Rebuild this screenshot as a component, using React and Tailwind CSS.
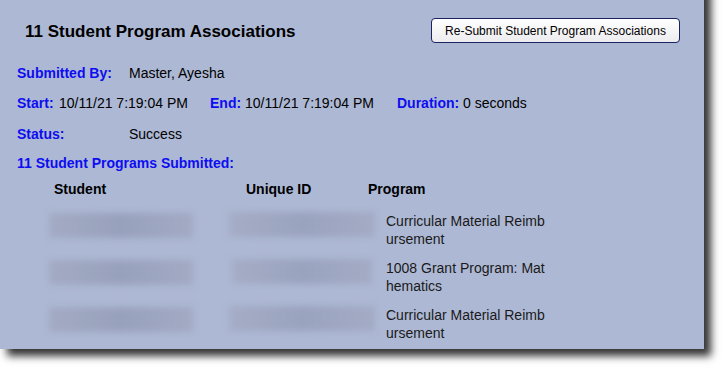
export default function App() {
  const lbl = "font-bold text-[#0d0df2]";
  const rows = [
    "Curricular Material Reimbursement",
    "1008 Grant Program: Mathematics",
    "Curricular Material Reimbursement",
  ];
  return (
    <div className="w-[724px] h-[369px] bg-white overflow-hidden" style={{ fontFamily: '"Liberation Sans", Arial, sans-serif' }}>
      <div className="w-[704px] h-[369px] -mt-[20px] bg-[#adb8d4] shadow-[7px_7px_8px_rgba(0,0,0,0.8)] text-[14px] text-black pt-[20px] leading-[16px]">
        <div className="flex items-start justify-between pl-[25px] pr-[24px] pt-[18px]">
          <div className="text-[17px] font-bold mt-[5px] leading-[18px]">11 Student Program Associations</div>
          <button className="h-[25px] w-[249px] rounded-[4px] border border-[#1c2260] bg-gradient-to-b from-white to-[#ececef] text-[12px] text-black">
            Re-Submit Student Program Associations
          </button>
        </div>
        <div className="pl-[17px]">
          <div className="flex mt-[22px]">
            <span className={`${lbl} w-[112px]`}>Submitted By:</span>
            <span>Master, Ayesha</span>
          </div>
          <div className="flex mt-[14px]">
            <span className={`${lbl} w-[42px]`}>Start:</span>
            <span className="w-[151px]">10/11/21 7:19:04 PM</span>
            <span className={`${lbl} w-[35px]`}>End:</span>
            <span className="w-[152px]">10/11/21 7:19:04 PM</span>
            <span className={`${lbl} w-[66px]`}>Duration:</span>
            <span>0 seconds</span>
          </div>
          <div className="flex mt-[15px]">
            <span className={`${lbl} w-[112px]`}>Status:</span>
            <span>Success</span>
          </div>
          <div className={`${lbl} mt-[13px]`}>11 Student Programs Submitted:</div>
        </div>
        <div className="grid grid-cols-[192px_122px_auto] pl-[54px] mt-[10px] font-bold">
          <span>Student</span>
          <span>Unique ID</span>
          <span>Program</span>
        </div>
        <div className="mt-[15px] flex flex-col gap-[11px]">
          {rows.map((p, i) => (
            <div key={i} className="flex items-start">
              <div className="w-[229px] pl-[49px] pt-[1px]">
                <div className="h-[25px] w-[144px] bg-gradient-to-r from-[#a3abc4] via-[#98a1bc] to-[#a2aac4] blur-[3px]" />
              </div>
              <div className="w-[157px]">
                <div className={`h-[25px] bg-gradient-to-r from-[#a5adc6] via-[#9aa3be] to-[#a3abc5] blur-[3px] ${i === 1 ? "ml-[3px] w-[140px]" : "w-[146px]"}`} />
              </div>
              <div className="w-[163px] break-all leading-[18px] text-[#1a1a1a]">{p}</div>
            </div>
          ))}
        </div>
      </div>
    </div>
  );
}
